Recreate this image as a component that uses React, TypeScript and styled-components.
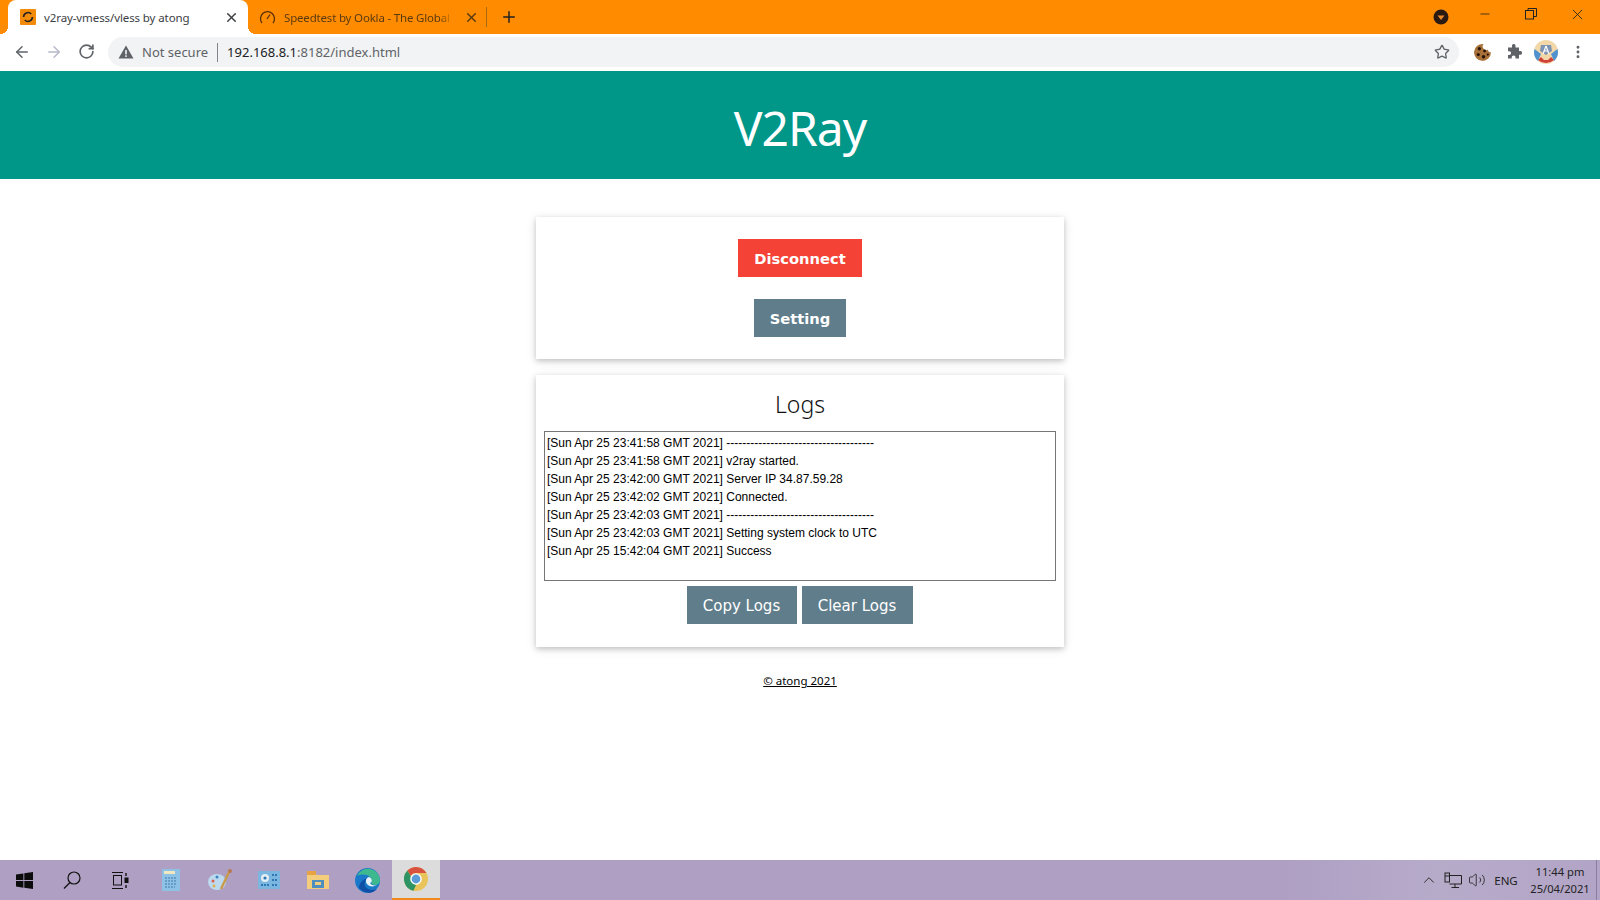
import styled, {createGlobalStyle} from "styled-components";
import {ArrowLeft, ArrowRight, ChevronUp, Minus, MoreVertical, Plus, RotateCw, Star, Volume2, X} from "lucide-react";

const Global = createGlobalStyle`
  html, body {
    margin: 0;
    padding: 0;
    background: #fff;
  }
  * {
    box-sizing: border-box;
  }
`

const Screen = styled.div`
  width: 1600px;
  height: 900px;
  overflow: hidden;
  display: flex;
  flex-direction: column;
  font-family: "Noto Sans", "Open Sans", sans-serif;
`

const TabStrip = styled.div`
  height: 34px;
  background: #ff8c00;
  display: flex;
  align-items: center;
  padding-left: 8px;
  flex-shrink: 0;
`

const ActiveTab = styled.div`
  width: 240px;
  height: 34px;
  background: #fff;
  border-radius: 8px 8px 0 0;
  display: flex;
  align-items: center;
  padding: 0 9px 0 12px;
  position: relative;
  color: #3c4043;

  &::before, &::after {
    content: "";
    position: absolute;
    bottom: 0;
    width: 8px;
    height: 8px;
  }
  &::before {
    left: -8px;
    background: radial-gradient(circle at 0 0, #ff8c00 8px, #fff 8px);
  }
  &::after {
    right: -8px;
    background: radial-gradient(circle at 100% 0, #ff8c00 8px, #fff 8px);
  }
`

const Tab = styled.div`
  width: 239px;
  height: 34px;
  display: flex;
  align-items: center;
  padding: 0 8px 0 11px;
  color: #5a3a10;
  position: relative;

  &::after {
    content: "";
    position: absolute;
    right: 0;
    top: 7px;
    height: 20px;
    width: 1px;
    background: #a86a10;
  }
`

const TabTitle = styled.div<{$fade?: boolean}>`
  flex: 1;
  margin-left: 8px;
  font-size: 11.5px;
  white-space: nowrap;
  overflow: hidden;
  letter-spacing: -0.1px;
  ${p => p.$fade ? "margin-right: 11px; letter-spacing: -0.18px; mask-image: linear-gradient(90deg, #000 92%, transparent);" : ""}
`

const NewTab = styled.div`
  width: 44px;
  display: flex;
  justify-content: center;
  color: #222;
`

const WindowControls = styled.div`
  margin-left: auto;
  display: flex;
  align-items: center;
  color: #222;
`

const WinButton = styled.div`
  width: 46px;
  height: 28px;
  margin-top: -6px;
  display: flex;
  align-items: center;
  justify-content: center;
`

const ProfileDot = styled.div`
  width: 46px;
  display: flex;
  justify-content: center;
  padding-left: 4px;
`

const Toolbar = styled.div`
  height: 37px;
  background: #fff;
  display: flex;
  align-items: center;
  flex-shrink: 0;
  padding-bottom: 1px;
`

const NavButton = styled.div<{$color?: string}>`
  width: 32px;
  display: flex;
  justify-content: center;
  color: ${p => p.$color || "#5f6368"};
`

const NavGroup = styled.div`
  display: flex;
  padding-left: 6px;
  width: 108px;
`

const AddressBar = styled.div`
  width: 1351px;
  height: 30px;
  border-radius: 15px;
  background: #f1f3f4;
  display: flex;
  align-items: center;
  padding: 0 9px 0 10px;
  font-size: 13px;
`

const NotSecure = styled.span`
  color: #5f6368;
  margin-left: 8px;
  padding-right: 9px;
  border-right: 1px solid #80868b;
  line-height: 19px;
`

const Url = styled.span`
  margin-left: 9px;
  color: #5f6368;
  flex: 1;

  b {
    font-weight: 400;
    color: #202124;
  }
`

const Extensions = styled.div`
  display: flex;
  align-items: center;
  padding-left: 7px;
`

const ExtSlot = styled.div`
  width: 32px;
  display: flex;
  justify-content: center;
  color: #5f6368;
`

const Banner = styled.header`
  height: 108px;
  background: #009688;
  color: #fff;
  display: flex;
  justify-content: center;
  align-items: center;
  flex-shrink: 0;
  font-size: 48px;
  padding-top: 5px;
  letter-spacing: -1px;
`

const Main = styled.main`
  flex: 1;
  display: flex;
  flex-direction: column;
  align-items: center;
  padding-top: 38px;
  background: #fff;
`

const Card = styled.section`
  width: 528px;
  background: #fff;
  box-shadow: 0 2px 5px rgba(0, 0, 0, .16), 0 2px 10px rgba(0, 0, 0, .12);
  display: flex;
  flex-direction: column;
  align-items: center;
`

const ActionsCard = styled(Card)`
  height: 142px;
  padding-top: 22px;
  gap: 22px;
`

const LogsCard = styled(Card)`
  height: 272px;
  margin-top: 16px;
  padding: 0 8px;
`

const Button = styled.button<{$color: string}>`
  height: 38px;
  border: none;
  color: #fff;
  background: ${p => p.$color};
  font-family: "DejaVu Sans", Verdana, sans-serif;
  font-size: 14.7px;
  font-weight: 700;
  padding: 0 16px;
`

const LogsTitle = styled.h2`
  margin: 0;
  height: 56px;
  line-height: 58px;
  font-size: 23px;
  font-weight: 300;
  color: #111;
`

const LogBox = styled.div`
  width: 100%;
  height: 150px;
  border: 1px solid #767676;
  padding: 2px 2px;
  font-family: "Liberation Sans", Arial, sans-serif;
  font-size: 12px;
  line-height: 18px;
  color: #000;
`

const LogLine = styled.div`
  white-space: nowrap;
`

const LogActions = styled.div`
  display: flex;
  gap: 5px;
  margin-top: 5px;
  margin-left: -1px;
`

const PlainButton = styled(Button)`
  font-weight: 400;
  font-size: 15px;
  width: 110px;
  padding: 1px 0 0;

  & + & {
    width: 111px;
  }
`

const Footer = styled.a`
  margin-top: 26px;
  font-size: 11.5px;
  line-height: 16px;
  color: #000;
  text-decoration: underline;
`

const Taskbar = styled.footer`
  height: 40px;
  flex-shrink: 0;
  background: linear-gradient(90deg, #ae9fc3 0, #ae9fc3 80%, #b7abca 90%, #b2a4c6 100%);
  display: flex;
  align-items: center;
`

const TaskSlot = styled.div<{$active?: boolean}>`
  width: 48px;
  height: 40px;
  display: flex;
  align-items: center;
  justify-content: center;
  color: #111;
  background: ${p => p.$active ? "#dcdcdc" : "transparent"};
  border-bottom: ${p => p.$active ? "2px solid #f08a1d" : "none"};
`

const TaskApps = styled.div`
  display: flex;
  gap: 1px;
  margin-left: 3px;
`

const Tray = styled.div`
  margin-left: auto;
  display: flex;
  align-items: center;
  color: #222;
  height: 40px;
`

const TrayIcon = styled.div`
  width: 24px;
  display: flex;
  justify-content: center;
`

const Lang = styled.div`
  width: 34px;
  text-align: center;
  font-size: 11.5px;
`

const Clock = styled.div`
  width: 68px;
  text-align: center;
  font-size: 11.2px;
  line-height: 17px;
  margin-left: 3px;
`

const ShowDesktop = styled.div`
  width: 1px;
  height: 40px;
  background: #8a7da0;
  margin: 0 3px 0 2px;
`

const OpenWrtIcon = () => (
    <svg width="16" height="16" viewBox="0 0 16 16">
        <rect width="16" height="16" rx="1" fill="#f28a0a"/>
        <path d="M3.6 8a4.4 4.4 0 0 1 7.6-3M12.4 8a4.4 4.4 0 0 1-7.6 3" fill="none" stroke="#222" strokeWidth="1.6"/>
    </svg>
)

const GaugeIcon = () => (
    <svg width="17" height="17" viewBox="0 0 17 17" fill="none" stroke="#5a3008" strokeWidth="1.3">
        <path d="M3 14a7 7 0 1 1 11 0"/>
        <path d="M8 10l3-4.5"/>
    </svg>
)

const WarningIcon = () => (
    <svg width="16" height="14" viewBox="0 0 16 14">
        <path d="M8 0.5L15.5 13.5H0.5Z" fill="#5f6368"/>
        <rect x="7.2" y="5" width="1.6" height="4.4" fill="#f1f3f4"/>
        <rect x="7.2" y="10.3" width="1.6" height="1.6" fill="#f1f3f4"/>
    </svg>
)

const ThemeBadge = () => (
    <svg width="16" height="16" viewBox="0 0 16 16">
        <circle cx="8" cy="8" r="7.5" fill="#2a1a12"/>
        <path d="M4.5 6.5h7L8 11z" fill="#e8892a"/>
    </svg>
)

const RestoreIcon = () => (
    <svg width="12" height="12" viewBox="0 0 12 12" fill="none" stroke="#222" strokeWidth="1">
        <rect x="0.5" y="2.5" width="8" height="8.5"/>
        <path d="M3 2.5V0.5H11.5V8.5H8.5"/>
    </svg>
)

const CookieIcon = () => (
    <svg width="19" height="19" viewBox="0 0 18 18">
        <path d="M10 1a8 8 0 1 0 7 8 3 3 0 0 1-3-2.5A3.5 3.5 0 0 1 10 1z" fill="#a8713a"/>
        <g fill="#2a1508">
            <circle cx="6" cy="5.5" r="1.6"/>
            <circle cx="11" cy="7.5" r="1.4"/>
            <circle cx="5" cy="11" r="1.5"/>
            <circle cx="10" cy="13" r="1.7"/>
            <circle cx="14" cy="11" r="1.1"/>
        </g>
    </svg>
)

const PuzzleIcon = () => (
    <svg width="16" height="16" viewBox="0 0 16 16" fill="#5f6368">
        <path d="M6 1.5a1.8 1.8 0 0 1 3.5 0V3.5h3.5V7h1.2a1.9 1.9 0 0 1 0 3.8H13v3.7H9.5v-1.2a1.9 1.9 0 0 0-3.8 0v1.2H2V11h1.2a1.9 1.9 0 0 0 0-3.8H2V3.5h4z"/>
    </svg>
)

const AvatarIcon = () => (
    <svg width="24" height="24" viewBox="0 0 24 24">
        <circle cx="12" cy="12" r="12" fill="#f2d7a8"/>
        <path d="M0.5 9A12 12 0 0 0 4 21l3-7z" fill="#4f92cf"/>
        <path d="M23.5 9A12 12 0 0 1 20 21l-3-7z" fill="#4f92cf"/>
        <path d="M4 20a12 12 0 0 0 16 0l-3-3-3 3h-4l-3-3z" fill="#cf4038"/>
        <path d="M7 5h10l1 6-6 4-6-4z" fill="#7d93b3"/>
        <path d="M12 6l-3 8M12 6l3 8M10 11h4" stroke="#fff" strokeWidth="1.2" fill="none"/>
    </svg>
)

const WindowsLogo = () => (
    <svg width="17" height="17" viewBox="0 0 17 17" fill="#0c0c0c">
        <path d="M0 2.4l7.4-1v6.7H0zM8.3 1.3L17 0v8.1H8.3zM0 9h7.4v6.7L0 14.6zM8.3 9H17v8l-8.7-1.2z"/>
    </svg>
)

const SearchGlass = () => (
    <svg width="18" height="18" viewBox="0 0 18 18" fill="none" stroke="#111" strokeWidth="1.2">
        <circle cx="11" cy="7" r="6"/>
        <path d="M7 11.5L1 17.5"/>
    </svg>
)

const TaskViewIcon = () => (
    <svg width="18" height="17" viewBox="0 0 18 17" fill="none" stroke="#111" strokeWidth="1">
        <path d="M1 .5h11M1 16.5h11"/>
        <rect x="2.5" y="3.5" width="8" height="9.5"/>
        <path d="M15 1v3" strokeWidth="1.4"/>
        <rect x="14" y="6" width="3" height="4.5" fill="#111"/>
        <path d="M15 13v3" strokeWidth="1.4"/>
    </svg>
)

const NotepadIcon = () => (
    <svg width="20" height="24" viewBox="0 0 20 24">
        <rect x="1" y="1" width="18" height="22" fill="#8dc2e6"/>
        <rect x="3" y="3" width="11" height="3" fill="#f2e8c0"/>
        <path d="M4 10h12M4 13h12M4 16h12M4 19h10" stroke="#5a93bd" strokeWidth="1.4" strokeDasharray="2 1"/>
    </svg>
)

const PaintIcon = () => (
    <svg width="26" height="24" viewBox="0 0 26 24">
        <ellipse cx="10" cy="14" rx="9" ry="8" fill="#bcd9ee"/>
        <circle cx="6" cy="13" r="1.5" fill="#d9604a"/>
        <circle cx="10" cy="9" r="1.5" fill="#3f82c4"/>
        <circle cx="7" cy="18" r="1.4" fill="#e0b040"/>
        <path d="M23 2L14 21" stroke="#c99a4a" strokeWidth="2.4"/>
        <circle cx="23" cy="3" r="2" fill="#b97a52"/>
    </svg>
)

const ControlIcon = () => (
    <svg width="24" height="20" viewBox="0 0 24 20">
        <rect x="1" y="1" width="22" height="18" fill="#7ab6df"/>
        <circle cx="8" cy="8" r="4" fill="#e3eef5"/>
        <circle cx="8" cy="8" r="1.6" fill="#2f77b5"/>
        <path d="M15 5h6M15 10h6M15 15h6M4 15h8" stroke="#2f77b5" strokeWidth="2" strokeDasharray="2 1"/>
    </svg>
)

const FolderIcon = () => (
    <svg width="24" height="20" viewBox="0 0 24 20">
        <path d="M1 3h8l2 2h12v14H1z" fill="#f4cd7c"/>
        <rect x="1" y="1" width="9" height="4" fill="#e7a343"/>
        <rect x="6" y="10" width="12" height="8" fill="#4f8fc0"/>
        <rect x="9" y="12" width="6" height="3" fill="#f4cd7c"/>
    </svg>
)

const EdgeIcon = () => (
    <svg width="25" height="25" viewBox="0 0 25 25">
        <circle cx="12.5" cy="12.5" r="12.5" fill="#1b79c9"/>
        <path d="M2 8A12 12 0 0 1 25 12c0 3-2 5-5 5-2 0-4-1-4-3 1-1 1-3-1-5-3-3-9-3-13-1z" fill="#3db88f"/>
        <path d="M4 20c5 6 14 6 18 1-4 2-10 1-12-3-1-3 0-6 3-8-5 1-9 5-9 10z" fill="#0f4fa5"/>
        <path d="M14 9c3 1 4 5 1 6 1 2 4 3 7 2-3 2-8 2-10-1-2-3-1-6 2-7z" fill="#fff" opacity=".9"/>
    </svg>
)

const ChromeIcon = () => (
    <svg width="24" height="24" viewBox="0 0 24 24">
        <circle cx="12" cy="12" r="12" fill="#e9c45b"/>
        <path d="M12 0a12 12 0 0 1 10.4 6H12a6 6 0 0 0-5.2 3L3.4 3.6A12 12 0 0 1 12 0z" fill="#d9513f"/>
        <path d="M3.4 3.6L9 13a6 6 0 0 0 3 5l-2.5 5.7A12 12 0 0 1 3.4 3.6z" fill="#2f9463"/>
        <circle cx="12" cy="12" r="5.8" fill="#fff"/>
        <circle cx="12" cy="12" r="4.4" fill="#5a9bd8"/>
    </svg>
)

const NetworkIcon = () => (
    <svg width="18" height="16" viewBox="0 0 18 16" fill="none" stroke="#222" strokeWidth="1">
        <path d="M5 3.5h12.5v8.5h-12M11 12v3M7.5 15.5H15"/>
        <rect x="1" y="1" width="4.5" height="9"/>
        <path d="M1 4h4.5"/>
    </svg>
)

const logs = [
    "[Sun Apr 25 23:41:58 GMT 2021] -------------------------------------",
    "[Sun Apr 25 23:41:58 GMT 2021] v2ray started.",
    "[Sun Apr 25 23:42:00 GMT 2021] Server IP 34.87.59.28",
    "[Sun Apr 25 23:42:02 GMT 2021] Connected.",
    "[Sun Apr 25 23:42:03 GMT 2021] -------------------------------------",
    "[Sun Apr 25 23:42:03 GMT 2021] Setting system clock to UTC",
    "[Sun Apr 25 15:42:04 GMT 2021] Success",
]

const App = () => {
    return (
        <Screen>
            <Global/>
            <TabStrip>
                <ActiveTab>
                    <OpenWrtIcon/>
                    <TabTitle>v2ray-vmess/vless by atong</TabTitle>
                    <X size={15} strokeWidth={2.4} color="#3c4043"/>
                </ActiveTab>
                <Tab>
                    <GaugeIcon/>
                    <TabTitle $fade>Speedtest by Ookla - The Global Broadband</TabTitle>
                    <X size={15} strokeWidth={2.4} color="#5a3a10"/>
                </Tab>
                <NewTab><Plus size={18} strokeWidth={2}/></NewTab>
                <WindowControls>
                    <ProfileDot><ThemeBadge/></ProfileDot>
                    <WinButton><Minus size={14} strokeWidth={1.4}/></WinButton>
                    <WinButton><RestoreIcon/></WinButton>
                    <WinButton><X size={17} strokeWidth={1.2}/></WinButton>
                </WindowControls>
            </TabStrip>
            <Toolbar>
                <NavGroup>
                    <NavButton><ArrowLeft size={18} strokeWidth={2}/></NavButton>
                    <NavButton $color="#b6b9c9"><ArrowRight size={18} strokeWidth={2}/></NavButton>
                    <NavButton><RotateCw size={17} strokeWidth={2.4}/></NavButton>
                </NavGroup>
                <AddressBar>
                    <WarningIcon/>
                    <NotSecure>Not secure</NotSecure>
                    <Url><b>192.168.8.1</b>:8182/index.html</Url>
                    <Star size={16} strokeWidth={2} color="#5f6368"/>
                </AddressBar>
                <Extensions>
                    <ExtSlot><CookieIcon/></ExtSlot>
                    <ExtSlot><PuzzleIcon/></ExtSlot>
                    <ExtSlot><AvatarIcon/></ExtSlot>
                    <ExtSlot><MoreVertical size={16} strokeWidth={2.4}/></ExtSlot>
                </Extensions>
            </Toolbar>
            <Banner>V2Ray</Banner>
            <Main>
                <ActionsCard>
                    <Button $color="#f44336">Disconnect</Button>
                    <Button $color="#607d8b">Setting</Button>
                </ActionsCard>
                <LogsCard>
                    <LogsTitle>Logs</LogsTitle>
                    <LogBox>
                        {logs.map((line, i) => <LogLine key={i}>{line}</LogLine>)}
                    </LogBox>
                    <LogActions>
                        <PlainButton $color="#607d8b">Copy Logs</PlainButton>
                        <PlainButton $color="#607d8b">Clear Logs</PlainButton>
                    </LogActions>
                </LogsCard>
                <Footer>© atong 2021</Footer>
            </Main>
            <Taskbar>
                <TaskSlot><WindowsLogo/></TaskSlot>
                <TaskSlot><SearchGlass/></TaskSlot>
                <TaskSlot><TaskViewIcon/></TaskSlot>
                <TaskApps>
                    <TaskSlot><NotepadIcon/></TaskSlot>
                    <TaskSlot><PaintIcon/></TaskSlot>
                    <TaskSlot><ControlIcon/></TaskSlot>
                    <TaskSlot><FolderIcon/></TaskSlot>
                    <TaskSlot><EdgeIcon/></TaskSlot>
                    <TaskSlot $active><ChromeIcon/></TaskSlot>
                </TaskApps>
                <Tray>
                    <TrayIcon><ChevronUp size={18} strokeWidth={1.2}/></TrayIcon>
                    <TrayIcon><NetworkIcon/></TrayIcon>
                    <TrayIcon><Volume2 size={18} strokeWidth={1.1}/></TrayIcon>
                    <Lang>ENG</Lang>
                    <Clock>11:44 pm<br/>25/04/2021</Clock>
                    <ShowDesktop/>
                </Tray>
            </Taskbar>
        </Screen>
    )
}

export default App
